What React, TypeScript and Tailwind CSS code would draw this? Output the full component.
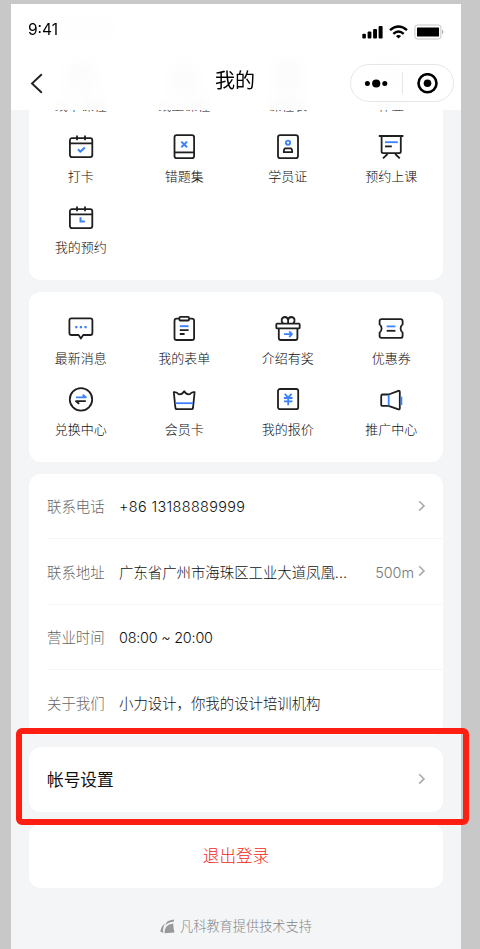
import type { ReactNode } from "react"

const BLUE = "#3b82fb"

function Icon({ children }: { children: ReactNode }) {
  return (
    <svg
      width="28"
      height="28"
      viewBox="0 0 28 28"
      fill="none"
      stroke="#1f1f1f"
      strokeWidth="1.8"
      strokeLinejoin="round"
      className="block shrink-0"
    >
      {children}
    </svg>
  )
}

function CalendarBase() {
  return (
    <>
      <rect x="2.9" y="5.2" width="22.4" height="18.9" rx="2" />
      <path d="M2.9 10.4H25.3M10 2.4V7.2M18 2.4V7.2" />
    </>
  )
}

const icons = {
  checkin: (
    <Icon>
      <CalendarBase />
      <path d="M11 16.3L13.4 18.7L17.8 14.5" stroke={BLUE} strokeWidth="2" />
    </Icon>
  ),
  mistakes: (
    <Icon>
      <rect x="4.5" y="2.2" width="19.6" height="23" rx="2.2" />
      <path d="M4.5 19.4H24.1" />
      <path d="M11.3 8.6L17.1 14.2M17.1 8.6L11.3 14.2" stroke={BLUE} strokeWidth="2" />
    </Icon>
  ),
  student: (
    <Icon>
      <rect x="4" y="2.2" width="20" height="23" rx="2.2" />
      <circle cx="14" cy="9.7" r="2.1" stroke={BLUE} strokeWidth="1.9" />
      <path d="M11.2 15.4H16.8Q18.2 15.8 18.2 19.2H9.8Q9.8 15.8 11.2 15.4Z" />
    </Icon>
  ),
  board: (
    <Icon>
      <path d="M1.8 3H26.4M4.6 3V18.6Q4.6 20.2 6.2 20.2H22.2Q23.8 20.2 23.8 18.6V3M10.6 21L6 25.4M18.2 21L22.8 25.4" />
      <path d="M8 9.2H20.8" stroke={BLUE} />
      <path d="M8 13.4H14.8" />
    </Icon>
  ),
  booking: (
    <Icon>
      <CalendarBase />
      <path d="M13.5 13.2V17.6H17.8" stroke={BLUE} strokeWidth="2" strokeLinejoin="miter" />
    </Icon>
  ),
  message: (
    <Icon>
      <path d="M4.4 3.3H23.4Q25.4 3.3 25.4 5.3V18Q25.4 20 23.4 20H16.2L13.9 23.5L11.6 20H4.4Q2.4 20 2.4 18V5.3Q2.4 3.3 4.4 3.3Z" />
      <path d="M8.2 12.1H10.4M12.8 12.1H15M17.4 12.1H19.6" stroke={BLUE} strokeWidth="2.1" />
    </Icon>
  ),
  form: (
    <Icon>
      <path d="M9 3.7H6.7Q4.5 3.7 4.5 5.9V22.9Q4.5 25 6.7 25H21.9Q24.1 25 24.1 22.9V5.9Q24.1 3.7 21.9 3.7H19.4" />
      <rect x="9.4" y="1.9" width="9.6" height="3.6" rx="1" />
      <path d="M9.8 11.2H18.6" stroke={BLUE} strokeWidth="1.9" />
      <path d="M9.8 15.1H18.6M9.8 19H14.6" />
    </Icon>
  ),
  gift: (
    <Icon>
      <rect x="2.3" y="8.6" width="23.4" height="4.8" rx="1" />
      <path d="M4.8 13.4V23Q4.8 25 6.8 25H21.4Q23.4 25 23.4 23V13.4" />
      <path d="M9 8.4Q7.2 6.6 7.7 4.4Q8.5 2 11 2Q13.9 2.2 14.1 5.2V8.4M19.2 8.4Q21 6.6 20.5 4.4Q19.7 2 17.2 2Q14.3 2.2 14.1 5.2" />
      <path d="M10 19.2H17.8M15.2 16.4L18 19.2L15.2 22" stroke={BLUE} />
    </Icon>
  ),
  coupon: (
    <Icon>
      <path d="M4.6 4.1H23.6Q25.6 4.1 25.6 6.1V9.4Q23.6 11 23.6 13.5Q23.6 16 25.6 17.6V20.9Q25.6 22.9 23.6 22.9H4.6Q2.6 22.9 2.6 20.9V17.6Q4.6 16 4.6 13.5Q4.6 11 2.6 9.4V6.1Q2.6 4.1 4.6 4.1Z" />
      <path d="M9.7 11.4H18.4" stroke={BLUE} />
      <path d="M9.7 15.8H18.4" />
    </Icon>
  ),
  exchange: (
    <Icon>
      <circle cx="14" cy="13.4" r="11.2" />
      <path d="M9 11.3H18.8L15.6 8.8" stroke={BLUE} />
      <path d="M18.8 15.2H9L12.2 17.7" />
    </Icon>
  ),
  member: (
    <Icon>
      <path d="M3.8 6.2L5.4 22Q5.6 23.2 6.8 23.2H21.6Q22.8 23.2 23 22L24.6 6.2Q21.6 5.6 19.8 8.2Q16.4 8.8 14.2 5.2Q12 8.8 8.6 8.2Q6.8 5.6 3.8 6.2Z" />
      <path d="M5.3 17.2H23.1" stroke={BLUE} />
    </Icon>
  ),
  quote: (
    <Icon>
      <rect x="4" y="3" width="20.2" height="20.2" rx="2" />
      <path d="M10.8 7.8L14.2 11.6L17.6 7.8M14.2 11.6V19.2M9.9 12H18.5M9.9 15.4H18.5" stroke={BLUE} strokeWidth="1.8" />
    </Icon>
  ),
  promote: (
    <Icon>
      <path d="M5.6 8.5H11.6L21.4 4.8Q22.8 4.5 22.8 6V22.2Q22.8 23.7 21.4 23.4L11.6 19.9H5.6Q4.2 19.9 4.2 18.5V9.9Q4.2 8.5 5.6 8.5Z" />
      <path d="M11.7 8.8V19.6" stroke={BLUE} />
      <path d="M24.4 10.6V19" stroke={BLUE} strokeWidth="1.8" />
    </Icon>
  ),
}

type Entry = { label: string; icon: ReactNode }

const studyEntries: Entry[] = [
  { label: "线下课程", icon: icons.booking },
  { label: "线上课程", icon: icons.mistakes },
  { label: "课程表", icon: icons.form },
  { label: "作业", icon: icons.student },
  { label: "打卡", icon: icons.checkin },
  { label: "错题集", icon: icons.mistakes },
  { label: "学员证", icon: icons.student },
  { label: "预约上课", icon: icons.board },
  { label: "我的预约", icon: icons.booking },
]

const serviceEntries: Entry[] = [
  { label: "最新消息", icon: icons.message },
  { label: "我的表单", icon: icons.form },
  { label: "介绍有奖", icon: icons.gift },
  { label: "优惠券", icon: icons.coupon },
  { label: "兑换中心", icon: icons.exchange },
  { label: "会员卡", icon: icons.member },
  { label: "我的报价", icon: icons.quote },
  { label: "推广中心", icon: icons.promote },
]

const contactRows = [
  { label: "联系电话", value: "+86 13188889999", arrow: true, spacing: "tracking-[0.37px]" },
  { label: "联系地址", value: "广东省广州市海珠区工业大道凤凰...", extra: "500m", arrow: true },
  { label: "营业时间", value: "08:00 ~ 20:00", spacing: "tracking-[-0.22px]" },
  { label: "关于我们", value: "小力设计，你我的设计培训机构" },
]

function EntryGrid({ entries }: { entries: Entry[] }) {
  return (
    <div className="grid grid-cols-4 gap-y-[18px]">
      {entries.map((entry) => (
        <div key={entry.label} className="flex flex-col items-center gap-[5px]">
          {entry.icon}
          <span className="text-[13px] leading-5 text-[#0c0c0c]">{entry.label}</span>
        </div>
      ))}
    </div>
  )
}

function Chevron() {
  return (
    <svg width="8" height="12" viewBox="0 0 8 12" fill="none" stroke="#aaa" strokeWidth="1.6" className="block shrink-0">
      <path d="M1.2 1.2L6 5.9L1.2 10.6" />
    </svg>
  )
}

function Header() {
  return (
    <header className="absolute inset-x-0 top-0 z-10 h-[106px] bg-white/93 backdrop-blur-[9px]">
      <div className="flex h-[52px] items-center justify-between pl-[17px] pr-[17px]">
        <span className="text-[15.5px] font-normal leading-5 text-black">9:41</span>
        <div className="flex items-center gap-[6px] pt-[3px]">
          <svg width="21" height="14" viewBox="0 0 21 14" className="block">
            <rect x="0.3" y="8.8" width="3.6" height="4.8" rx="1" />
            <rect x="5.6" y="6.6" width="3.8" height="7" rx="1" />
            <rect x="11.1" y="3.9" width="3.9" height="9.7" rx="1" />
            <rect x="16.6" y="1" width="4" height="12.6" rx="1" />
          </svg>
          <svg width="19" height="14" viewBox="0 0 19 14" fill="none" stroke="#000" strokeWidth="2.4" className="block">
            <path d="M1 5.2Q9.5 -2 18 5.2" />
            <path d="M4.3 8.8Q9.5 4.4 14.7 8.8" />
            <path d="M9.5 13.6L6.9 11.1Q9.5 8.9 12.1 11.1Z" fill="#000" stroke="none" />
          </svg>
          <svg width="30" height="16" viewBox="0 0 30 16" className="block">
            <rect x="0.9" y="1" width="26" height="14" rx="2.5" fill="#fff" stroke="#c4c4c4" />
            <rect x="3" y="3.5" width="22" height="9" rx="0.6" />
            <path d="M28 5.8Q29.5 6.4 29.5 8Q29.5 9.6 28 10.2Z" fill="#b5b5b5" />
          </svg>
        </div>
      </div>
      <div className="flex h-[54px] items-center pl-[19px] pr-[7px]">
        <div className="w-[104px]">
          <svg width="13" height="21" viewBox="0 0 13 21" fill="none" stroke="#222" strokeWidth="1.9" className="block">
            <path d="M11.8 1.2L2 10.5L11.8 19.8" />
          </svg>
        </div>
        <h1 className="flex-1 pb-[5px] pr-[14px] text-center text-[20px] font-normal leading-6 text-black">我的</h1>
        <div className="flex h-[38px] w-[104px] items-center rounded-full border border-[#e6e6e6] bg-white/60">
          <div className="flex flex-1 items-center justify-center">
            <svg width="24" height="9" viewBox="0 0 24 9" className="block">
              <circle cx="3.4" cy="4.5" r="2.5" />
              <circle cx="12.2" cy="4.5" r="4.1" />
              <circle cx="20.8" cy="4.5" r="2.5" />
            </svg>
          </div>
          <div className="h-[22px] w-px bg-[#e6e6e6]" />
          <div className="flex flex-1 justify-center">
            <svg width="21" height="21" viewBox="0 0 21 21" className="block">
              <circle cx="10.5" cy="10.2" r="9" fill="none" stroke="#000" strokeWidth="2.6" />
              <circle cx="10.5" cy="10.2" r="3.8" />
            </svg>
          </div>
        </div>
      </div>
    </header>
  )
}

export default function App() {
  return (
    <div className="relative h-[949px] w-[480px] overflow-hidden bg-[#c8c8c8] pl-[11px] pt-1 font-['Inter','Noto_Sans_CJK_SC',sans-serif] font-light">
      <div className="relative h-[945px] w-[450px] overflow-hidden bg-[#f3f5f7]">
        <Header />
        <main className="flex flex-col gap-3 px-[18px]">
          <section className="rounded-b-xl bg-white pb-[23px] pt-[15px]">
            <div className="mb-[23px] ml-[20px] h-5 w-[66px] rounded bg-[#ddd]" />
            <EntryGrid entries={studyEntries} />
          </section>

          <section className="rounded-xl bg-white py-[23px]">
            <EntryGrid entries={serviceEntries} />
          </section>

          <section className="rounded-xl bg-white pl-[18px]">
            {contactRows.map((row) => (
              <div
                key={row.label}
                className="flex h-[65.3px] items-center border-b border-[#f6f6f7] pr-[17px] text-[14.4px] last:border-b-0"
              >
                <span className="w-[72px] shrink-0 pt-[2px] text-[#666]">{row.label}</span>
                <span className={`flex-1 whitespace-nowrap pt-[2px] text-[#111] ${row.spacing ?? ""}`}>{row.value}</span>
                {row.extra && <span className="mr-1 pt-[2px] text-[#777]">{row.extra}</span>}
                {row.arrow && <Chevron />}
              </div>
            ))}
          </section>

          <section className="flex h-[64.5px] items-center justify-between rounded-xl bg-white pl-[18px] pr-[17px]">
            <span className="pt-[2px] text-[16.7px] font-normal text-[#111]">帐号设置</span>
            <Chevron />
          </section>

          <section className="flex h-[64.5px] items-center justify-center rounded-xl bg-white">
            <span className="pt-[2px] text-[16.6px] text-[#f01f14]">退出登录</span>
          </section>

          <footer className="flex items-center justify-center gap-[5px] pt-[16px] text-[13.2px] leading-5 text-[#858585]">
            <svg width="15" height="15" viewBox="0 0 15 15" fill="#999" className="block">
              <path d="M4.6 14.3Q4.4 10.4 6.4 7.6Q8.6 5 13.2 4.6Q13.4 9.6 14.4 13.6Z" />
              <path d="M3.4 14L0.2 12.4Q1.2 7.2 4.6 4.2Q4 6.2 3.6 7.8Q2.6 10.4 3.4 14Z" />
              <path d="M5.2 6.4Q5.6 4.2 7.2 2.4Q10 0.8 14 0.4V2.6Q8.6 3 5.2 6.4Z" />
            </svg>
            <span>凡科教育提供技术支持</span>
          </footer>
        </main>
      </div>
      <div className="absolute left-[16px] top-[728px] z-20 h-[97px] w-[453px] rounded-[6px] border-[6px] border-[#ff1f12]" />
    </div>
  )
}
